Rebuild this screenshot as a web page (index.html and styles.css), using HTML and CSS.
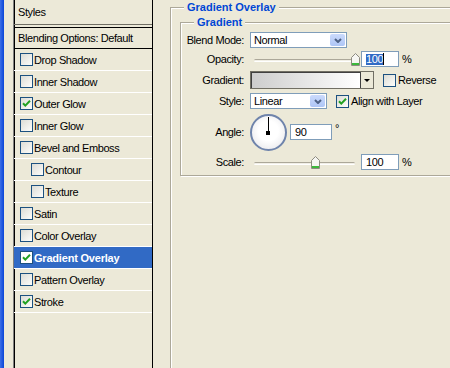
FILE: index.html
```html
<!DOCTYPE html>
<html lang="en">
<head>
  <meta charset="UTF-8">
  <title>Layer Style - Gradient Overlay</title>
  <link rel="stylesheet" href="styles.css">
</head>
<body>
  <div class="frame"></div>

  <!-- Styles list -->
  <aside class="styles">
    <div class="styles-head">Styles</div>
    <div class="styles-blend">Blending Options: Default</div>
    <ul class="fx-list">
      <li class="fx"><span class="check"></span>Drop Shadow</li>
      <li class="fx"><span class="check"></span>Inner Shadow</li>
      <li class="fx"><span class="check"><svg viewBox="0 0 11 11"><path d="M2 5.2 L4.3 7.6 L9 2.8" /></svg></span>Outer Glow</li>
      <li class="fx"><span class="check"></span>Inner Glow</li>
      <li class="fx"><span class="check"></span>Bevel and Emboss</li>
      <li class="fx sub"><span class="check"></span>Contour</li>
      <li class="fx sub"><span class="check"></span>Texture</li>
      <li class="fx"><span class="check"></span>Satin</li>
      <li class="fx"><span class="check"></span>Color Overlay</li>
      <li class="fx selected"><span class="check"><svg viewBox="0 0 11 11"><path d="M2 5.2 L4.3 7.6 L9 2.8" /></svg></span>Gradient Overlay</li>
      <li class="fx"><span class="check"></span>Pattern Overlay</li>
      <li class="fx"><span class="check"><svg viewBox="0 0 11 11"><path d="M2 5.2 L4.3 7.6 L9 2.8" /></svg></span>Stroke</li>
    </ul>
  </aside>

  <!-- Settings -->
  <main class="pane">
    <fieldset class="group overlay">
      <legend>Gradient Overlay</legend>
      <fieldset class="group gradient">
        <legend>Gradient</legend>

        <div class="row r-blend">
          <span class="lbl">Blend Mode:</span>
          <div class="select w-blend"><span>Normal</span><span class="drop"><svg viewBox="0 0 8 5"><path d="M1 1 L4 4 L7 1" /></svg></span></div>
        </div>

        <div class="row r-opacity">
          <span class="lbl">Opacity:</span>
          <div class="slider">
            <span class="track"></span>
            <svg class="thumb t-opacity" viewBox="0 0 9 13"><path class="thumb-body" d="M0.5 4.5 L4.5 0.5 L8.5 4.5 L8.5 12.5 L0.5 12.5 Z" /><rect class="thumb-foot" x="1" y="10" width="7" height="2" /></svg>
          </div>
          <div class="num"><span class="sel">100</span><span class="caret"></span></div>
          <span class="unit">%</span>
        </div>

        <div class="row r-grad">
          <span class="lbl">Gradient:</span>
          <div class="grad"><span class="grad-fill"></span><span class="grad-btn"><span class="tri"></span></span></div>
          <span class="check box-reverse"></span><span class="opt">Reverse</span>
        </div>

        <div class="row r-style">
          <span class="lbl">Style:</span>
          <div class="select w-style"><span>Linear</span><span class="drop"><svg viewBox="0 0 8 5"><path d="M1 1 L4 4 L7 1" /></svg></span></div>
          <span class="check box-align"><svg viewBox="0 0 11 11"><path d="M2 5.2 L4.3 7.6 L9 2.8" /></svg></span><span class="opt">Align with Layer</span>
        </div>

        <div class="row r-angle">
          <span class="lbl">Angle:</span>
          <div class="dial"><span class="hand"></span><span class="hub"></span></div>
          <div class="num w-angle">90</div>
          <span class="deg">°</span>
        </div>

        <div class="row r-scale">
          <span class="lbl">Scale:</span>
          <div class="slider">
            <span class="track"></span>
            <svg class="thumb t-scale" viewBox="0 0 9 13"><path class="thumb-body" d="M0.5 4.5 L4.5 0.5 L8.5 4.5 L8.5 12.5 L0.5 12.5 Z" /><rect class="thumb-foot" x="1" y="10" width="7" height="2" /></svg>
          </div>
          <div class="num">100</div>
          <span class="unit">%</span>
        </div>
      </fieldset>
    </fieldset>
  </main>
</body>
</html>
```

FILE: styles.css
```css
/* Page */
body {
  margin: 0;
  width: 450px;
  height: 368px;
  overflow: hidden;
  display: flex;
  background: #ece9d8;
  font-family: "Liberation Sans", Arial, sans-serif;
  font-size: 11px;
  letter-spacing: -0.4px;
  color: #000;
}

/* Window frame edge */
.frame {
  width: 4px;
  margin-right: 9px;
  background: linear-gradient(to right, #3d6fe6, #0a46d8);
}

/* Styles list */
.styles {
  width: 140px;
  box-sizing: border-box;
  border-left: 1px solid #7f7f7f;
  border-right: 1px solid #000;
  box-shadow: inset 1px 0 0 #000;
  flex-shrink: 0;
}

.styles-head {
  height: 24px;
  line-height: 24px;
  padding-left: 4px;
  border-bottom: 1px solid #6f6d63;
}

.styles-blend {
  margin-top: 2px;
  height: 20px;
  line-height: 20px;
  padding-left: 4px;
  border-top: 1px solid #000;
  border-bottom: 1px solid #000;
}

.fx-list {
  list-style: none;
  margin: 0;
  padding: 0;
}

.fx {
  height: 21px;
  border-bottom: 1px solid #fff;
  display: flex;
  align-items: center;
  padding-left: 6px;
}

.fx.sub {
  padding-left: 17px;
}

.fx.selected {
  background: #316ac5;
  color: #fff;
  font-weight: bold;
  letter-spacing: -0.2px;
}

/* XP checkbox */
.check {
  width: 13px;
  height: 13px;
  box-sizing: border-box;
  border: 1px solid #1c5180;
  background: linear-gradient(135deg, #dcdcd5, #fdfdfb);
  margin-right: 1px;
  display: flex;
  flex-shrink: 0;
}

.check svg {
  width: 11px;
  height: 11px;
}

.check path {
  fill: none;
  stroke: #21a121;
  stroke-width: 2;
}

.fx.selected .check {
  background: #fff;
}

/* Right pane */
.pane {
  flex: 1;
  padding-left: 17px;
}

.group {
  margin: 0;
  border: 1px solid #aca899;
  border-right: none;
  box-shadow: inset 1px 1px 0 #fff, 1px 1px 0 #fff;
}

.group legend {
  font-weight: bold;
  letter-spacing: 0;
  color: #0046d5;
  line-height: 14px;
  padding: 0 3px;
  background: #ece9d8;
}

.overlay {
  height: 100%;
  box-sizing: border-box;
  border-bottom: none;
  padding: 1px 0 0 9px;
}

.overlay > legend {
  margin-left: 4px;
}

.gradient {
  padding: 3px 0 5px 0;
}

.gradient > legend {
  margin-left: 13px;
}

/* Form rows */
.row {
  display: flex;
  align-items: center;
  height: 16px;
}

.r-opacity { margin-top: 3px; }
.r-grad { margin-top: 4px; height: 18px; }
.r-style { margin-top: 4px; }
.r-angle { margin-top: 4px; height: 38px; }
.r-scale { margin-top: 3px; }

.lbl {
  width: 63px;
  margin-right: 6px;
  text-align: right;
  flex-shrink: 0;
}

/* Dropdowns */
.select {
  height: 16px;
  box-sizing: border-box;
  border: 1px solid #7f9db9;
  background: #fff;
  display: flex;
  align-items: center;
  justify-content: space-between;
  padding-left: 3px;
}

.w-blend { width: 97px; }
.w-style { width: 77px; }

.drop {
  width: 15px;
  height: 12px;
  margin-right: 1px;
  border-radius: 2px;
  background: linear-gradient(#cbdafc, #aec6f6);
  display: flex;
  align-items: center;
  justify-content: center;
}

.drop svg {
  width: 8px;
  height: 5px;
}

.drop path {
  fill: none;
  stroke: #4d6185;
  stroke-width: 2;
}

/* Sliders */
.slider {
  position: relative;
  width: 111px;
  height: 16px;
  flex-shrink: 0;
}

.track {
  position: absolute;
  left: 4px;
  right: 6px;
  top: 8px;
  height: 3px;
  box-sizing: border-box;
  border-top: 1px solid #aca899;
  border-bottom: 1px solid #fff;
  border-radius: 2px;
  background: #f1efe6;
}

.thumb {
  position: absolute;
  top: 2px;
  width: 9px;
  height: 13px;
}

.t-opacity { left: 101px; }
.t-scale { left: 61px; }

.thumb-body {
  fill: #f6f6f2;
  stroke: #8d8b80;
  stroke-width: 1;
}

.thumb-foot {
  fill: #3cb83c;
}

/* Number fields */
.num {
  width: 38px;
  height: 16px;
  box-sizing: border-box;
  border: 1px solid #7f9db9;
  background: #fff;
  padding-left: 4px;
  display: flex;
  align-items: center;
}

.w-angle {
  width: 42px;
  margin-left: 3px;
}

.sel {
  background: #316ac5;
  color: #fff;
  line-height: 11px;
}

.caret {
  width: 1px;
  height: 12px;
  background: #000;
}

.unit {
  margin-left: 3px;
}

.deg {
  margin-left: 3px;
  margin-bottom: 8px;
}

/* Gradient preview */
.grad {
  width: 124px;
  height: 18px;
  box-sizing: border-box;
  border: 1px solid #716f64;
  box-shadow: inset 1px 1px 0 #404040;
  display: flex;
}

.grad-fill {
  flex: 1;
  margin: 1px 0 0 1px;
  background: linear-gradient(to right, #cdcdcd, #fff);
}

.grad-btn {
  width: 12px;
  border-left: 1px solid #404040;
  background: #ece9d8;
  display: flex;
  align-items: center;
  justify-content: center;
}

.tri {
  width: 0;
  height: 0;
  border-left: 3px solid transparent;
  border-right: 3px solid transparent;
  border-top: 3px solid #000;
}

.box-reverse,
.box-align {
  margin-left: 9px;
}

.opt {
  margin-left: 1px;
}

/* Angle dial */
.dial {
  position: relative;
  width: 37px;
  height: 37px;
  box-sizing: border-box;
  border: 2px solid #6f84ab;
  border-radius: 50%;
  background: radial-gradient(circle at 50% 45%, #fff 40%, #e2e2e6);
  flex-shrink: 0;
}

.hand {
  position: absolute;
  left: 16px;
  top: 1px;
  width: 1px;
  height: 16px;
  background: #000;
}

.hub {
  position: absolute;
  left: 14px;
  top: 15px;
  width: 4px;
  height: 4px;
  background: #000;
}
```
